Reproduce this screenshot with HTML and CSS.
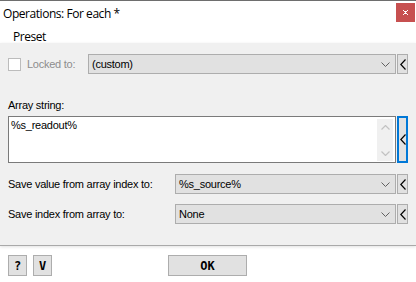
FILE: index.html
```html
<!DOCTYPE html>
<html lang="en">

<head>
    <meta charset="UTF-8">
    <title>Operations: For each *</title>
    <link rel="stylesheet" href="styles.css">
</head>

<body>
    <div class="window">
        <div class="titlebar">
            <span class="title">Operations: For each *</span>
            <span class="close">
                <svg width="7" height="7" viewBox="0 0 7 7">
                    <path d="M1 1h1v1h-1zM5 1h1v1h-1zM2 2h3v1h-3zM3 3h1v1h-1zM2 4h3v1h-3zM1 5h1v1h-1zM5 5h1v1h-1z" fill="#fff" />
                </svg>
            </span>
        </div>
        <div class="menubar">
            <span class="menu-item">Preset</span>
        </div>
        <div class="panel">
            <div class="row">
                <div class="lock">
                    <span class="checkbox"></span>
                    <span class="lock-text">Locked to:</span>
                </div>
                <div class="combo">
                    <span class="combo-text">(custom)</span>
                    <svg class="combo-arrow" width="9" height="5" viewBox="0 0 9 5">
                        <polyline points="0.5,0.5 4.5,4.5 8.5,0.5" fill="none" stroke="#606060" />
                    </svg>
                </div>
                <button class="side-btn">
                    <svg width="6" height="11" viewBox="0 0 6 11">
                        <polyline points="5.5,0.5 0.8,5.5 5.5,10.5" fill="none" stroke="#000" stroke-width="1.2" />
                    </svg>
                </button>
            </div>

            <div class="field-label">Array string:</div>
            <div class="row row-text">
                <div class="textbox">
                    <span class="textbox-text">%s_readout%</span>
                    <div class="scrollbar">
                        <svg width="9" height="5" viewBox="0 0 9 5">
                            <polyline points="0.5,4.5 4.5,0.5 8.5,4.5" fill="none" stroke="#c2c2c2" stroke-width="1.2" />
                        </svg>
                        <svg width="9" height="5" viewBox="0 0 9 5">
                            <polyline points="0.5,0.5 4.5,4.5 8.5,0.5" fill="none" stroke="#c2c2c2" stroke-width="1.2" />
                        </svg>
                    </div>
                </div>
                <button class="side-btn side-btn-focus">
                    <svg width="6" height="11" viewBox="0 0 6 11">
                        <polyline points="5.5,0.5 0.8,5.5 5.5,10.5" fill="none" stroke="#000" stroke-width="1.2" />
                    </svg>
                </button>
            </div>

            <div class="row row-save">
                <span class="save-label">Save value from array index to:</span>
                <div class="combo">
                    <span class="combo-text">%s_source%</span>
                    <svg class="combo-arrow" width="9" height="5" viewBox="0 0 9 5">
                        <polyline points="0.5,0.5 4.5,4.5 8.5,0.5" fill="none" stroke="#606060" />
                    </svg>
                </div>
                <button class="side-btn">
                    <svg width="6" height="11" viewBox="0 0 6 11">
                        <polyline points="5.5,0.5 0.8,5.5 5.5,10.5" fill="none" stroke="#000" stroke-width="1.2" />
                    </svg>
                </button>
            </div>

            <div class="row row-save row-last">
                <span class="save-label">Save index from array to:</span>
                <div class="combo">
                    <span class="combo-text">None</span>
                    <svg class="combo-arrow" width="9" height="5" viewBox="0 0 9 5">
                        <polyline points="0.5,0.5 4.5,4.5 8.5,0.5" fill="none" stroke="#606060" />
                    </svg>
                </div>
                <button class="side-btn">
                    <svg width="6" height="11" viewBox="0 0 6 11">
                        <polyline points="5.5,0.5 0.8,5.5 5.5,10.5" fill="none" stroke="#000" stroke-width="1.2" />
                    </svg>
                </button>
            </div>
        </div>

        <div class="footer">
            <button class="small-btn">?</button>
            <button class="small-btn">V</button>
            <button class="ok-btn">OK</button>
        </div>
    </div>
</body>

</html>
```

FILE: styles.css
```css
body {
    margin: 0;
    width: 416px;
    height: 282px;
    overflow: hidden;
    background-color: #fff;
    font-family: 'Liberation Sans', Arial, sans-serif;
    font-size: 11px;
    letter-spacing: -0.25px;
    color: #000;
}

.window {
    border-top: 1px solid #6e6e6e;
}

.titlebar {
    height: 24px;
    display: flex;
    align-items: flex-start;
    justify-content: space-between;
}

.title {
    font-family: 'Open Sans', sans-serif;
    font-size: 12px;
    letter-spacing: -0.45px;
    margin: 4px 0 0 3px;
}

.close {
    width: 19px;
    height: 19px;
    margin-top: 2px;
    margin-right: 1px;
    background-color: #c75050;
    display: flex;
    align-items: center;
    justify-content: center;
}

.menubar {
    height: 14px;
    padding: 4px 0 0 13px;
}

.menu-item {
    font-family: 'Open Sans', sans-serif;
    font-size: 12px;
    letter-spacing: -0.45px;
    line-height: 16px;
}

.panel {
    background-color: #f0f0f0;
    padding: 11px 8px 21px 8px;
    border-bottom: 1px solid #a9a9a9;
    box-shadow: 0 1px 3px rgba(0, 0, 0, 0.12);
}

.row {
    display: flex;
    height: 20px;
}

.lock {
    width: 80px;
    display: flex;
    align-items: center;
}

.checkbox {
    width: 11px;
    height: 11px;
    border: 1px solid #bcbcbc;
    background-color: #fff;
}

.lock-text {
    color: #8d8d8d;
    margin-left: 6px;
}

.combo {
    flex: 1;
    box-sizing: border-box;
    border: 1px solid #adadad;
    background-color: #e1e1e1;
    display: flex;
    align-items: center;
    justify-content: space-between;
    padding: 0 5px 0 3px;
}

.combo-arrow {
    margin-top: 1px;
}

.side-btn {
    width: 11px;
    margin: 0 0 0 1px;
    padding: 0;
    box-sizing: border-box;
    border: 1px solid #adadad;
    background-color: #e1e1e1;
    display: flex;
    align-items: center;
    justify-content: center;
}

.side-btn-focus {
    border: 2px solid #0078d7;
}

.field-label {
    margin-top: 25px;
    height: 17px;
}

.row-text {
    height: 47px;
}

.textbox {
    flex: 1;
    box-sizing: border-box;
    border: 1px solid #7a7a7a;
    background-color: #fff;
    display: flex;
    justify-content: space-between;
    padding: 2px 2px 0 2px;
}

.textbox-text {
    line-height: 13px;
}

.scrollbar {
    width: 16px;
    height: 42px;
    background-color: #f0f0f0;
    display: flex;
    flex-direction: column;
    align-items: center;
    justify-content: space-between;
    padding: 6px 0 5px 0;
    box-sizing: border-box;
}

.row-save {
    margin-top: 11px;
    align-items: center;
}

.row-last {
    margin-top: 10px;
}

.save-label {
    width: 167px;
}

.row-save .combo,
.row-save .side-btn {
    align-self: stretch;
}

.footer {
    display: flex;
    padding: 9px 0 0 8px;
}

.small-btn,
.ok-btn {
    height: 21px;
    box-sizing: border-box;
    border: 1px solid #adadad;
    background-color: #e1e1e1;
    font-family: 'DejaVu Sans Mono', monospace;
    font-weight: bold;
    font-size: 12px;
    letter-spacing: 0;
    padding: 0;
    color: #000;
}

.small-btn {
    width: 19px;
    margin-right: 6px;
}

.ok-btn {
    width: 79px;
    margin-left: 110px;
}
```
